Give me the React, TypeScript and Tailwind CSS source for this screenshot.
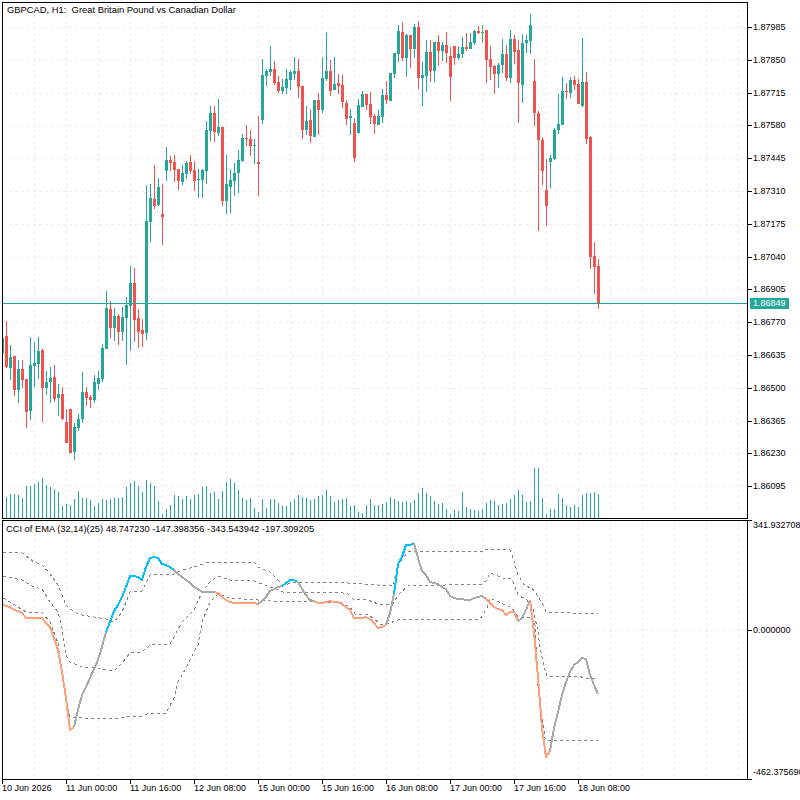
import React from 'react'

// body top, body bottom, high, low in page pixels; first candle sits under the left frame
type Candle = [number, number, number, number, number]
const UP = 1
const DOWN = 0
const FLAT = 2

const candles: Candle[] = [
  [UP,338,353,338,353],[DOWN,336,367,321,368],[UP,357,368,345,380],[DOWN,356,390,356,396],[UP,369,390,360,403],[DOWN,369,380,360,388],[DOWN,379,412,379,428],[UP,365,411,337,420],
  [UP,363,366,342,387],[UP,351,364,337,379],[DOWN,350,388,349,422],[UP,382,388,371,395],[UP,378,382,367,403],[DOWN,377,399,365,402],[UP,394,398,384,416],[DOWN,394,419,387,420],
  [DOWN,422,443,409,443],[DOWN,409,453,409,453],[UP,427,452,423,460],[UP,419,428,414,431],[UP,392,419,372,423],[DOWN,392,398,387,406],[DOWN,397,400,395,408],[UP,382,400,375,403],
  [UP,378,384,371,390],[UP,348,379,344,382],[UP,308,349,291,349],[DOWN,309,328,301,338],[UP,316,328,308,341],[DOWN,316,332,314,345],[UP,317,332,307,341],[UP,305,318,297,365],
  [UP,283,306,266,351],[DOWN,283,320,268,342],[DOWN,318,332,309,348],[DOWN,330,334,319,347],[UP,221,333,185,340],[UP,198,222,184,242],[DOWN,199,206,165,209],[UP,187,205,178,206],
  [DOWN,214,217,184,245],[UP,160,171,147,181],[DOWN,160,163,156,171],[DOWN,162,170,155,182],[DOWN,169,181,169,190],[UP,173,182,165,185],[UP,163,174,161,179],[DOWN,162,171,155,174],
  [DOWN,170,181,161,191],[UP,179,180,169,198],[UP,170,180,169,198],[UP,130,171,121,184],[UP,113,131,106,141],[DOWN,113,132,106,142],[UP,127,133,99,136],[DOWN,127,201,127,206],
  [UP,184,201,155,214],[UP,180,187,169,213],[UP,173,181,163,196],[UP,160,173,150,193],[UP,138,161,134,162],[DOWN,138,139,125,146],[DOWN,139,146,130,156],[UP,145,146,139,164],
  [DOWN,162,164,116,196],[UP,75,120,59,124],[UP,71,76,69,86],[UP,69,72,46,76],[DOWN,69,83,61,85],[DOWN,82,91,76,93],[UP,87,91,79,94],[UP,79,88,69,94],
  [UP,72,80,70,90],[UP,71,74,57,80],[DOWN,71,87,59,98],[DOWN,86,130,86,139],[UP,121,130,106,135],[DOWN,120,136,109,143],[UP,100,137,100,137],[DOWN,100,110,93,135],
  [UP,78,110,57,113],[UP,71,79,32,81],[DOWN,71,91,60,96],[UP,84,90,57,90],[DOWN,83,86,74,94],[DOWN,85,102,75,108],[DOWN,103,119,100,125],[UP,116,118,109,135],
  [DOWN,123,158,118,162],[UP,105,133,99,133],[UP,94,107,91,107],[DOWN,94,105,94,110],[DOWN,104,117,92,124],[DOWN,116,124,114,134],[UP,116,125,110,125],[UP,95,117,89,123],
  [DOWN,95,100,81,104],[UP,73,101,73,101],[UP,53,74,53,78],[UP,31,54,25,62],[DOWN,32,58,22,61],[UP,35,58,34,77],[DOWN,35,49,35,68],[UP,27,49,24,58],
  [DOWN,27,78,21,89],[UP,75,78,62,106],[UP,52,76,40,92],[DOWN,52,71,40,82],[UP,42,71,42,82],[DOWN,42,51,35,66],[UP,45,51,42,61],[DOWN,45,53,32,63],
  [DOWN,56,77,47,101],[DOWN,46,58,46,65],[UP,54,58,46,60],[UP,47,54,37,58],[DOWN,47,49,33,51],[UP,42,49,33,49],[UP,31,43,30,45],[DOWN,31,33,26,34],
  [FLAT,32,33,25,43],[DOWN,30,60,30,83],[DOWN,59,67,46,80],[DOWN,66,74,65,94],[UP,65,74,63,88],[UP,54,65,39,73],[DOWN,54,78,45,81],[UP,39,78,30,83],
  [DOWN,39,52,35,64],[DOWN,50,83,40,123],[UP,43,85,34,103],[UP,40,43,35,53],[UP,25,41,14,54],[DOWN,81,113,59,126],[DOWN,113,140,111,231],[DOWN,140,171,137,185],
  [DOWN,190,206,159,226],[UP,158,162,155,188],[UP,130,159,128,160],[UP,124,130,94,134],[UP,91,125,77,125],[DOWN,91,92,83,99],[UP,80,93,77,98],[DOWN,80,85,76,90],
  [DOWN,84,104,79,104],[UP,82,106,38,107],[DOWN,82,139,72,144],[DOWN,137,257,136,269],[DOWN,256,267,242,294],[DOWN,266,304,259,309],
]

const candleColors = ['#ef5350', '#26a69a', '#3cb371']

const volumes = [
  21,24,24,23,20,32,32,34,36,40,33,31,29,26,12,14,13,19,27,20,20,18,12,15,19,18,19,20,20,21,31,35,37,32,26,38,35,32,17,4,9,13,23,22,19,22,19,23,24,31,32,25,26,19,27,36,39,35,28,20,18,20,10,6,19,10,
  19,19,15,12,12,16,19,23,21,20,18,19,22,23,28,22,16,18,19,20,12,13,6,5,13,19,13,13,14,16,21,19,17,16,17,15,18,25,30,25,22,17,14,15,9,4,8,7,26,11,9,8,7,9,15,18,17,13,14,15,19,23,28,23,16,17,50,50,20,4,9,9,24,20,13,11,13,11,23,25,25,26,24,
]

const ORANGE = '#ffa07a'
const GRAY = '#a9a9a9'
const BLUE = '#00bfff'

// main CCI line, colour changes along the way; from = candle index, x = 6 + 4 * index
const cciSegments: { color: string; from: number; ys: number[] }[] = [
  { color: ORANGE, from: -1, ys: [604,606,607,610,611,613,618,618,618,618,618,623,627,638,650,672,698,730,727] },
  { color: GRAY, from: 17, ys: [727,710,695,687,678,669,660,647,632] },
  { color: BLUE, from: 25, ys: [632,622,611,605,597,587,576,576,577,580,567,558,557,558,564,565,567,570] },
  { color: GRAY, from: 42, ys: [570,574,577,580,583,587,589,592,592,592,592] },
  { color: ORANGE, from: 52, ys: [592,593,597,600,602,603,603,603,603,603,603,604] },
  { color: GRAY, from: 63, ys: [604,601,597,591,589,587,586] },
  { color: BLUE, from: 69, ys: [586,583,580,580,582] },
  { color: GRAY, from: 73, ys: [582,589,595,600,601] },
  { color: ORANGE, from: 77, ys: [601,603,603,602,601,602,602,604,607,610,618,618,618,617,619,623,628,627,625] },
  { color: GRAY, from: 95, ys: [625,613,594] },
  { color: BLUE, from: 97, ys: [594,564,557,545,545,543] },
  { color: GRAY, from: 102, ys: [543,558,571,575,582,583,584,587,589,596,598,599,599,600,600,598,597,596,599] },
  { color: ORANGE, from: 120, ys: [599,603,607,609,610,615,612,612,621] },
  { color: GRAY, from: 128, ys: [621,618,610,600] },
  { color: ORANGE, from: 131, ys: [600,632,678,728,757,751] },
  { color: GRAY, from: 136, ys: [751,728,712,695,682,672,665,662,658,659,675,685,694] },
]

const bands = [
  '3,552 22,553 34,562 42,565 50,574 58,585 66,605 74,612 82,615 94,617 106,619 114,622 122,612 130,592 142,591 150,575 158,574 174,574 182,570 194,567 206,563 218,562 254,562 258,567 270,572 283,585 298,582 348,583 393,586 398,565 408,552 417,551 483,551 488,549 510,550 513,558 518,575 525,586 532,588 537,595 545,608 546,612 598,614',
  '3,576 22,580 34,587 42,589 50,602 58,612 62,628 66,655 70,662 82,667 98,668 114,671 122,663 130,653 142,652 150,645 170,644 182,622 194,610 202,592 210,582 218,576 230,580 254,581 270,587 283,592 338,592 348,594 353,599 368,600 378,604 393,604 398,595 408,586 482,584 487,580 490,573 503,578 512,579 518,595 527,600 533,608 538,632 540,648 545,670 547,676 578,676 585,678 598,678',
  '3,598 18,607 26,612 42,613 50,622 58,643 66,702 70,717 82,718 118,718 130,716 142,716 150,713 166,713 174,698 178,682 186,668 194,652 198,645 202,622 210,602 218,594 230,598 258,600 270,601 313,602 340,602 350,607 355,614 368,614 380,624 387,624 398,620 480,619 487,608 490,598 503,604 512,608 518,617 532,617 535,625 538,688 540,702 545,738 546,740 598,741',
]

const priceLabels = ['1.87985','1.87850','1.87715','1.87580','1.87445','1.87310','1.87175','1.87040','1.86905','1.86770','1.86635','1.86500','1.86365','1.86230','1.86095']
const priceGrid = [27,60,93,126,158,191,224,257,289,322,355,388,421,453,486]
const timeLabels = ['10 Jun 2026','11 Jun 00:00','11 Jun 16:00','12 Jun 08:00','15 Jun 00:00','15 Jun 16:00','16 Jun 08:00','17 Jun 00:00','17 Jun 16:00','18 Jun 08:00']
const gridX = Array.from({ length: 23 }, (_, i) => 34 + 32 * i)

function GridLines({ ys, y1, y2 }: { ys: number[]; y1: number; y2: number }) {
  return (
    <g stroke="#f0ecf0" strokeWidth={1} strokeDasharray="3 3">
      {gridX.map((x) => (
        <line key={x} x1={x + 0.5} x2={x + 0.5} y1={y1} y2={y2} />
      ))}
      {ys.map((y) => (
        <line key={y} x1={3} x2={747} y1={y + 0.5} y2={y + 0.5} />
      ))}
    </g>
  )
}

function PriceChart() {
  return (
    <svg width={744} height={515} viewBox="3 3 744 515" shapeRendering="crispEdges" className="block">
      <GridLines ys={priceGrid} y1={3} y2={518} />
      {volumes.map((h, i) => (
        <rect key={i} x={6 + 4 * i} y={518 - h} width={1} height={h} fill="#26a69a" />
      ))}
      {candles.map(([kind, top, bottom, high, low], i) => {
        const x = 2 + 4 * i
        const color = candleColors[kind]
        return (
          <g key={i} fill={color}>
            <rect x={x} y={high} width={1} height={low - high} />
            <rect x={x - 1} y={top} width={3} height={bottom - top} />
          </g>
        )
      })}
      <rect x={3} y={303} width={744} height={1} fill="#26a69a" />
    </svg>
  )
}

function CciChart() {
  return (
    <svg width={744} height={258} viewBox="3 521 744 258" shapeRendering="crispEdges" className="block">
      <GridLines ys={[630]} y1={521} y2={779} />
      <g fill="none" stroke="#808080" strokeWidth={1} strokeDasharray="3 3">
        {bands.map((points, i) => (
          <polyline key={i} points={points} />
        ))}
      </g>
      <g fill="none" strokeWidth={2} strokeLinejoin="round">
        {cciSegments.map((seg) => (
          <polyline
            key={seg.from}
            stroke={seg.color}
            points={seg.ys.map((y, j) => `${6 + 4 * (seg.from + j)},${y}`).join(' ')}
          />
        ))}
      </g>
    </svg>
  )
}

export default function App() {
  return (
    <div className="relative h-[800px] w-[800px] overflow-hidden bg-white pl-[2px] pt-[2px] font-['Liberation_Sans',sans-serif] text-[9px] leading-none text-black">
      {/* price panel */}
      <div className="flex h-[517px]">
        <div className="relative h-[517px] w-[746px] border border-black">
          <PriceChart />
          <div className="absolute left-[4px] top-[2px] whitespace-pre text-[9.4px]">GBPCAD, H1:  Great Britain Pound vs Canadian Dollar</div>
        </div>
        <div className="relative flex-1 pt-[9.2px]">
          {priceLabels.map((label) => (
            <div key={label} className="flex h-[32.8px] items-center">
              <div className="h-px w-[4px] bg-black" />
              <span className="ml-[1px]">{label}</span>
            </div>
          ))}
          <div className="absolute left-[2px] top-[296px] flex h-[11px] w-[39px] items-center bg-[#26a69a] pl-[3px] text-white">1.86849</div>
        </div>
      </div>

      {/* CCI panel */}
      <div className="mt-px flex h-[260px]">
        <div className="relative h-[260px] w-[746px] border border-black">
          <CciChart />
          <div className="absolute left-[3px] top-[4px] whitespace-pre text-[9.3px]">CCI of EMA (32,14)(25) 48.747230 -147.398356 -343.543942 -197.309205</div>
        </div>
        <div className="flex flex-1 flex-col whitespace-nowrap">
          <div className="flex h-[105px] items-start">
            <div className="h-px w-[4px] bg-black" />
            <span className="ml-[1px] mt-[1px]">341.932708</span>
          </div>
          <div className="flex h-[11px] items-center">
            <div className="h-px w-[4px] bg-black" />
            <span className="ml-[1px]">0.000000</span>
          </div>
          <div className="mt-auto flex items-end">
            <div className="h-px w-[4px] bg-black" />
            <span className="mb-[3px] ml-[1px]">-462.375690</span>
          </div>
        </div>
      </div>

      {/* time axis */}
      <div className="flex">
        {timeLabels.map((label) => (
          <div key={label} className="w-[64px] shrink-0 whitespace-nowrap">
            <div className="h-[4px] w-px bg-black" />
            <div>{label}</div>
          </div>
        ))}
      </div>
    </div>
  )
}
